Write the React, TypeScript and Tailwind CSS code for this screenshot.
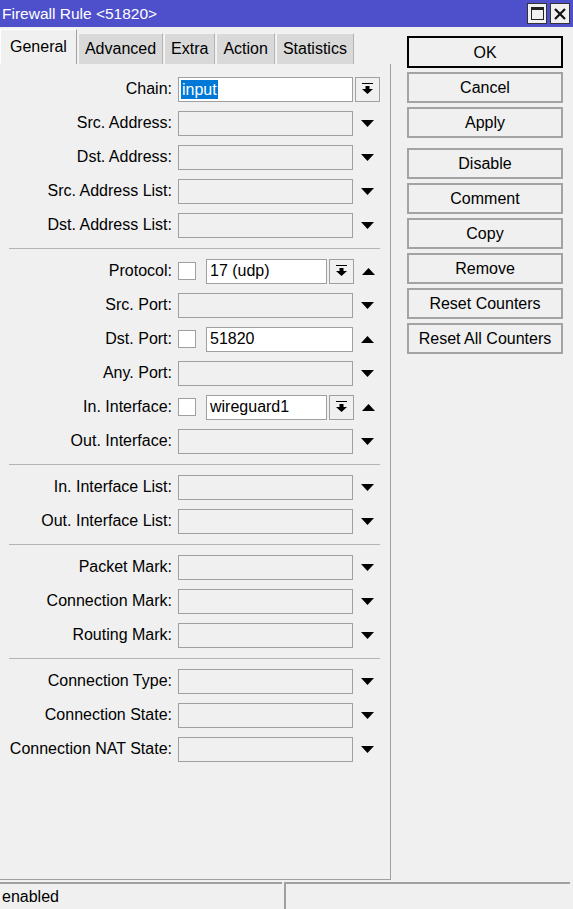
import * as React from "react"

type RowKind = "combo" | "empty" | "checkCombo" | "checkText"

interface Row {
  label: string
  kind: RowKind
  value?: string
  selected?: boolean
}

const groups: Row[][] = [
  [
    { label: "Chain:", kind: "combo", value: "input", selected: true },
    { label: "Src. Address:", kind: "empty" },
    { label: "Dst. Address:", kind: "empty" },
    { label: "Src. Address List:", kind: "empty" },
    { label: "Dst. Address List:", kind: "empty" },
  ],
  [
    { label: "Protocol:", kind: "checkCombo", value: "17 (udp)" },
    { label: "Src. Port:", kind: "empty" },
    { label: "Dst. Port:", kind: "checkText", value: "51820" },
    { label: "Any. Port:", kind: "empty" },
    { label: "In. Interface:", kind: "checkCombo", value: "wireguard1" },
    { label: "Out. Interface:", kind: "empty" },
  ],
  [
    { label: "In. Interface List:", kind: "empty" },
    { label: "Out. Interface List:", kind: "empty" },
  ],
  [
    { label: "Packet Mark:", kind: "empty" },
    { label: "Connection Mark:", kind: "empty" },
    { label: "Routing Mark:", kind: "empty" },
  ],
  [
    { label: "Connection Type:", kind: "empty" },
    { label: "Connection State:", kind: "empty" },
    { label: "Connection NAT State:", kind: "empty" },
  ],
]

const tabs = ["General", "Advanced", "Extra", "Action", "Statistics"]

const buttonGroups = [
  ["OK", "Cancel", "Apply"],
  ["Disable", "Comment", "Copy", "Remove", "Reset Counters", "Reset All Counters"],
]

function DownArrow() {
  return (
    <svg width="13" height="7" viewBox="0 0 13 7">
      <polygon points="0,0 13,0 6.5,7" fill="#000" />
    </svg>
  )
}

function UpArrow() {
  return (
    <svg width="13" height="7" viewBox="0 0 13 7">
      <polygon points="0,7 13,7 6.5,0" fill="#000" />
    </svg>
  )
}

function DropButton() {
  return (
    <div className="ml-[2px] flex h-[25px] w-[25px] items-center justify-center border border-[#a0a0a0] bg-[#f0f0f0]">
      <svg width="11" height="12" viewBox="0 0 11 12">
        <rect x="0" y="0" width="11" height="1" fill="#000" />
        <rect x="3.5" y="3" width="4" height="3" fill="#000" />
        <polygon points="0,6 11,6 5.5,11" fill="#000" />
      </svg>
    </div>
  )
}

function Field({ value, selected, width }: { value?: string; selected?: boolean; width: string }) {
  return (
    <div className={`flex h-[25px] items-center border border-[#a0a0a0] bg-white pl-[2px] ${width}`}>
      {selected ? (
        <span className="bg-[#0078d7] px-[1px] leading-[19px] text-white">{value}</span>
      ) : (
        <span className="pl-[1px]">{value}</span>
      )}
    </div>
  )
}

function CheckBox() {
  return <div className="h-[18px] w-[18px] border border-[#a0a0a0] bg-white" />
}

function FormRow({ row }: { row: Row }) {
  return (
    <div className="flex h-[34px] items-center">
      <div className="w-[172px] text-right">{row.label}</div>
      <div className="ml-[6px] flex items-center">
        {row.kind === "combo" && (
          <>
            <Field value={row.value} selected={row.selected} width="w-[175px]" />
            <DropButton />
          </>
        )}
        {row.kind === "empty" && (
          <>
            <div className="h-[25px] w-[175px] border border-[#a0a0a0] bg-[#f0f0f0]" />
            <div className="ml-[2px] flex w-[25px] justify-center">
              <DownArrow />
            </div>
          </>
        )}
        {row.kind === "checkCombo" && (
          <>
            <CheckBox />
            <div className="ml-[10px]">
              <Field value={row.value} width="w-[121px]" />
            </div>
            <DropButton />
            <div className="ml-[2px] flex w-[25px] justify-center">
              <UpArrow />
            </div>
          </>
        )}
        {row.kind === "checkText" && (
          <>
            <CheckBox />
            <div className="ml-[10px]">
              <Field value={row.value} width="w-[147px]" />
            </div>
            <div className="ml-[2px] flex w-[25px] justify-center">
              <UpArrow />
            </div>
          </>
        )}
      </div>
    </div>
  )
}

export default function App() {
  return (
    <div
      className="flex h-[909px] w-[573px] flex-col overflow-hidden bg-[#f0f0f0] text-[16px] text-black"
      style={{ fontFamily: '"Liberation Sans", Arial, sans-serif' }}
    >
      {/* title bar */}
      <div className="flex h-[27px] shrink-0 items-center justify-between bg-[#4e4fca] pl-[2px] pr-[3px]">
        <span className="text-[15.5px] text-white">Firewall Rule &lt;51820&gt;</span>
        <div className="flex gap-[3px]">
          <div className="flex h-[21px] w-[20px] items-center justify-center border border-[#333] bg-[#f0f0f0]">
            <div className="h-[13px] w-[13px] border border-t-[3px] border-[#222]" />
          </div>
          <div className="flex h-[21px] w-[20px] items-center justify-center border border-[#333] bg-[#f0f0f0]">
            <svg width="12" height="12" viewBox="0 0 12 12">
              <path d="M1 1L11 11M11 1L1 11" stroke="#111" strokeWidth="2.2" />
            </svg>
          </div>
        </div>
      </div>

      <div className="flex flex-1">
        {/* left: tabs + form */}
        <div className="flex w-[391px] flex-col">
          <div className="flex h-[37px] items-end pt-[2px]">
            {tabs.map((t, i) =>
              i === 0 ? (
                <div
                  key={t}
                  className="flex h-[35px] items-center border-l border-t border-r border-l-white border-t-white border-r-[#a0a0a0] bg-[#f0f0f0] px-[9px]"
                >
                  {t}
                </div>
              ) : (
                <div
                  key={t}
                  className="ml-[1px] flex h-[31px] items-center border-l border-t border-r border-l-[#f4f4f4] border-t-[#f4f4f4] border-r-[#b4b4b4] bg-[#d9d9d9] px-[6px]"
                >
                  {t}
                </div>
              )
            )}
          </div>
          <div className="flex flex-1 flex-col border-b border-r border-[#a0a0a0] pt-[8px]">
            {groups.map((g, gi) => (
              <React.Fragment key={gi}>
                {gi > 0 && (
                  <div className="flex h-[12px] items-center">
                    <div className="ml-[9px] h-px w-[371px] bg-[#b4b4b4]" />
                  </div>
                )}
                {g.map((r) => (
                  <FormRow key={r.label} row={r} />
                ))}
              </React.Fragment>
            ))}
          </div>
        </div>

        {/* right: buttons */}
        <div className="flex flex-col gap-[10px] pl-[16px] pt-[9px]">
          {buttonGroups.map((bg, bi) => (
            <div key={bi} className="flex flex-col gap-[4px]">
              {bg.map((b) => (
                <div
                  key={b}
                  className={
                    b === "OK"
                      ? "flex h-[32px] w-[156px] items-center justify-center border-2 border-black bg-[#f0f0f0] pt-[1px]"
                      : "flex h-[31px] w-[156px] items-center justify-center border-2 border-[#a3a3a3] bg-[#f0f0f0]"
                  }
                >
                  {b}
                </div>
              ))}
            </div>
          ))}
        </div>
      </div>

      {/* status bar */}
      <div className="mt-[2px] flex h-[27px] shrink-0">
        <div className="flex w-[282px] items-center border-t-2 border-[#a0a0a0] pl-[2px]">enabled</div>
        <div className="ml-[2px] w-[286px] border-l-2 border-t-2 border-[#a0a0a0]" />
      </div>
    </div>
  )
}
